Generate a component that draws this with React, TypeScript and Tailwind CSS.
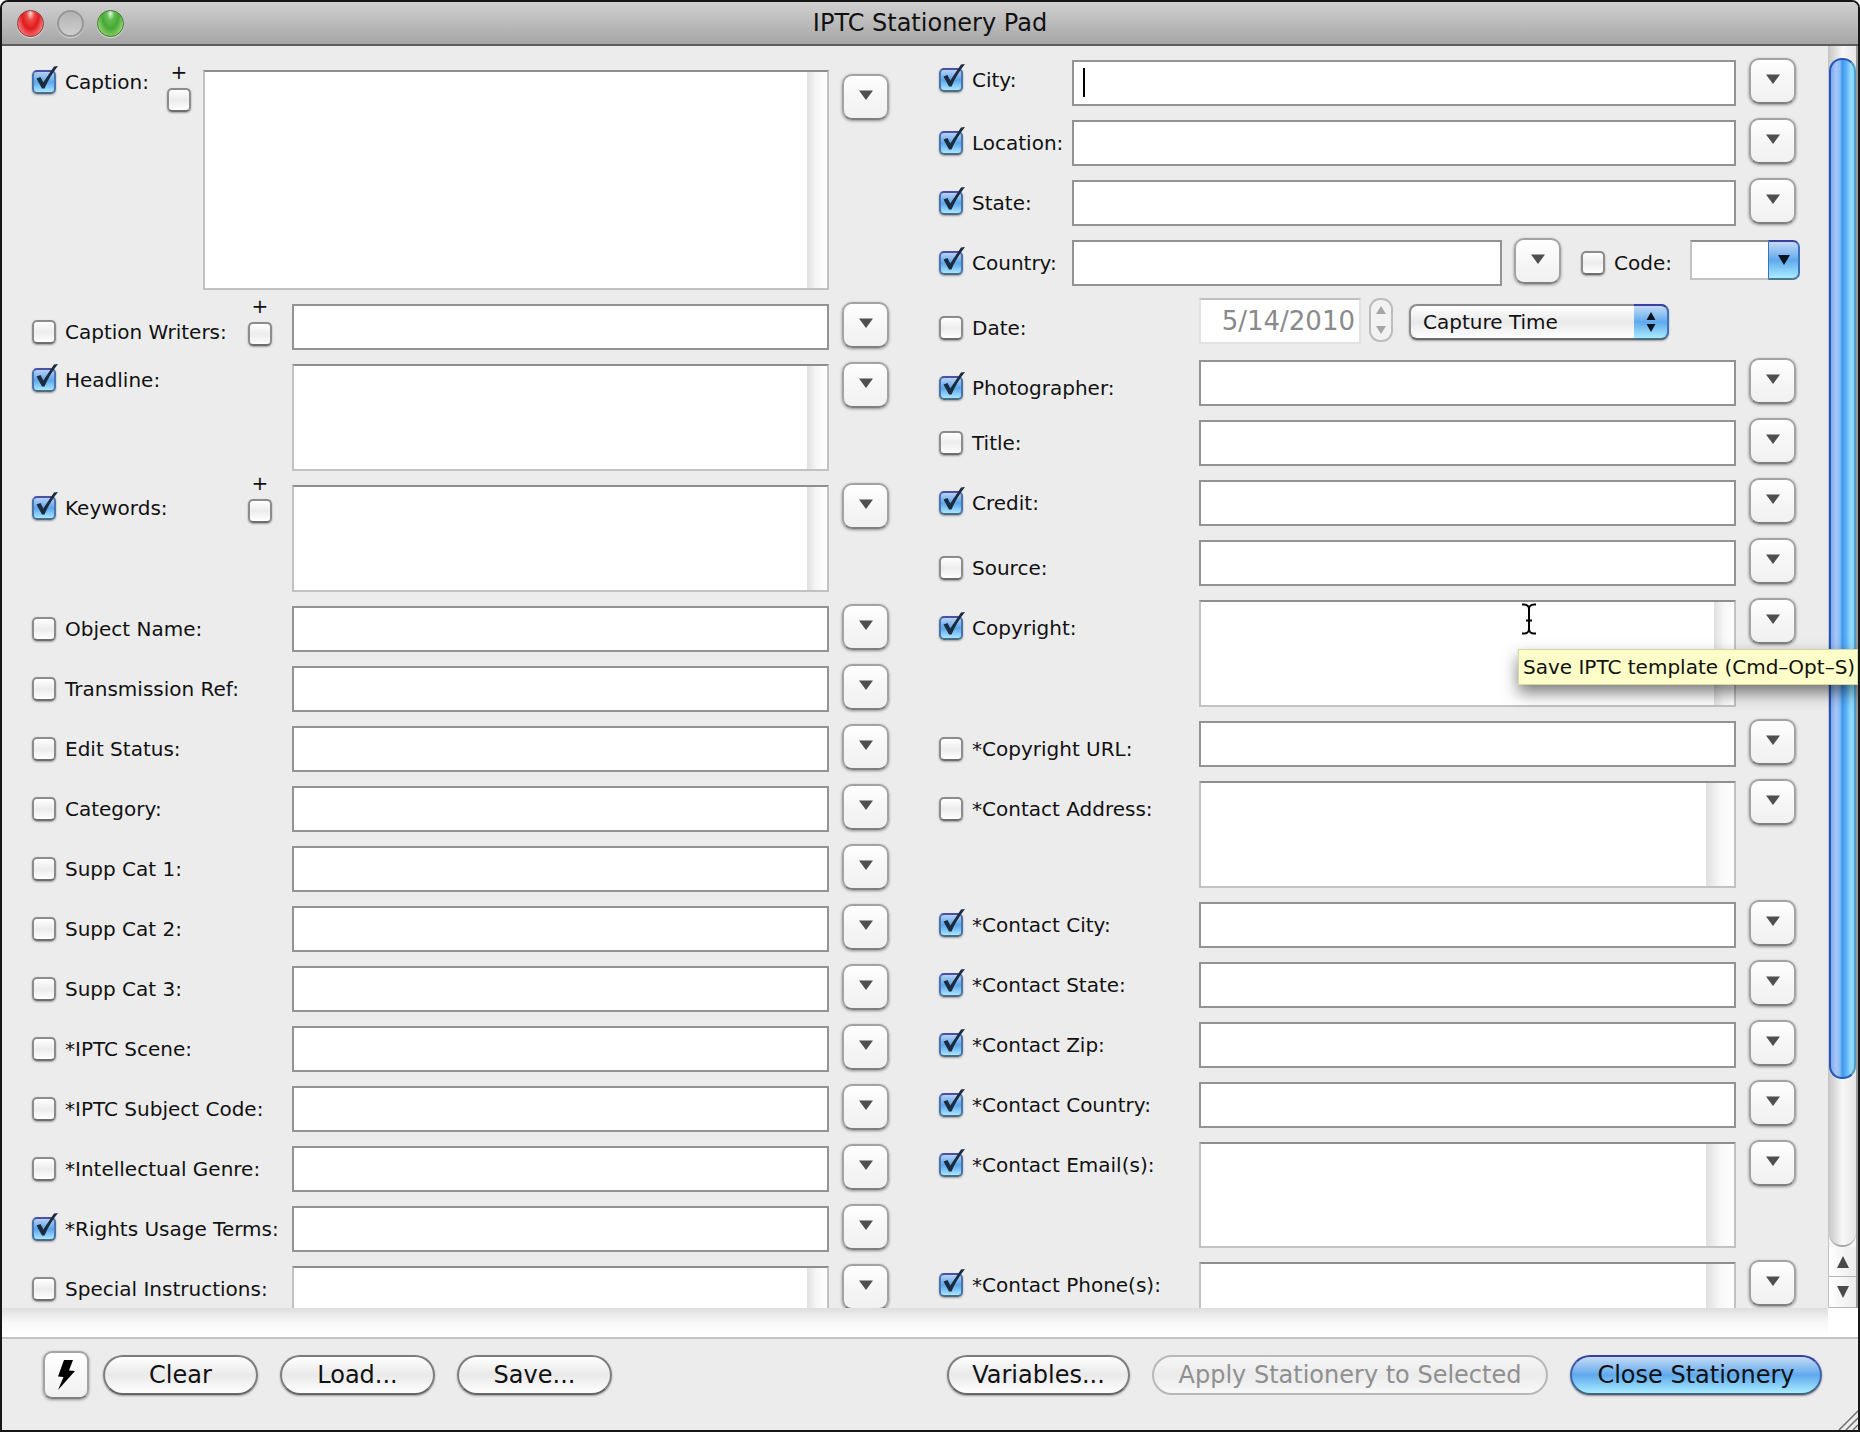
import { useState } from "react";
import clsx from "clsx";

const labelWide = "w-[260px]";
const labelCity = "w-[133px]";
const labelCaption = "w-[171px]";

const whiteGloss =
  "bg-linear-to-b from-white via-[#e9e9e9] to-white";

const blueGloss =
  "bg-linear-to-b from-[#c3dbf5] via-[#5fa9ec] to-[#a9ecff]";

const pill =
  "flex h-10 items-center justify-center rounded-full border-2 text-[24px] leading-7 whitespace-nowrap";

type CheckBoxProps = {
  id: string;
  checked?: boolean;
  label?: string;
};

const CheckBox = ({ id, checked = false, label }: CheckBoxProps) => {
  const [isOn, setIsOn] = useState(checked);

  return (
    <span className="relative block h-6 w-6 shrink-0">
      <input
        type="checkbox"
        id={id}
        aria-label={label}
        checked={isOn}
        onChange={() => setIsOn(!isOn)}
        className={clsx(
          "block h-6 w-6 appearance-none rounded-[5px] border-2 shadow-[0_1px_2px_rgba(0,0,0,0.35)]",
          isOn
            ? "border-[#4a72ab] border-t-[#4c4fa6] border-b-[#4d6b85] bg-linear-to-b from-[#b5d1f3] via-[#5ba5ea] to-[#a8e6ff]"
            : "border-[#8c8c8c] border-b-[#6e6e6e] bg-linear-to-b from-white via-[#ececec] to-white"
        )}
      />
      {isOn && (
        <svg
          viewBox="0 0 28 30"
          className="pointer-events-none absolute -top-1 left-0 h-[30px] w-7"
        >
          <path
            d="M4.5 12.5L8.500 11L11.300 16.500L22 0.500L26 0C20.500 7 16 14 12.500 22.500L10 22.500Z"
            fill="#1c2b3d"
          />
        </svg>
      )}
    </span>
  );
};

const DropButton = ({
  label,
  className = "-mt-0.5",
}: {
  label: string;
  className?: string;
}) => (
  <button
    type="button"
    aria-label={`${label} history`}
    className={clsx(
      "flex h-[46px] w-[47px] shrink-0 justify-center rounded-[10px] border-2 border-[#a3a3a3] border-b-[#808080] bg-linear-to-b from-white via-[#f6f6f6] to-[#f1f1f1] pt-[14px] shadow-[0_1px_3px_rgba(0,0,0,0.4)]",
      className
    )}
  >
    <svg viewBox="0 0 14 10" className="h-[10px] w-[14px]">
      <path d="M0 0.500H14L7 10Z" fill="#4f4f4f" />
    </svg>
  </button>
);

type RowProps = {
  name: string;
  checked?: boolean;
  // height of the multi-line box, single line when left out
  area?: string;
  strip?: string;
  labelWidth?: string;
  labelPad?: string;
  buttonTop?: string;
  plus?: string;
  caret?: boolean;
};

const Label = ({
  id,
  name,
  checked,
  labelPad = "pt-[11px]",
}: {
  id: string;
  name: string;
  checked?: boolean;
  labelPad?: string;
}) => (
  <div className={clsx("flex items-center gap-[9px] self-start", labelPad)}>
    <CheckBox id={id} checked={checked} />
    <label htmlFor={id} className="text-[20px] leading-6 whitespace-nowrap">
      {name}
    </label>
  </div>
);

const Row = ({
  name,
  checked,
  area,
  strip = "w-[20px]",
  labelWidth = labelWide,
  labelPad,
  buttonTop,
  plus,
  caret,
}: RowProps) => {
  const id = name.toLowerCase().replace(/[^a-z0-9]+/g, "-");

  return (
    <div className="flex items-start">
      <div className={clsx("flex shrink-0 justify-between", labelWidth)}>
        <Label id={id} name={name} checked={checked} labelPad={labelPad} />
        {plus && (
          <div className={clsx("flex flex-col items-center gap-1.5", plus)}>
            <span className="text-[20px] leading-5">+</span>
            <CheckBox id={`${id}-append`} label={`Append to ${name}`} />
          </div>
        )}
      </div>

      {area ? (
        <div
          className={clsx(
            "flex min-w-0 flex-1 border-2 border-[#c2c2c2] border-t-[#8e8e8e] bg-white",
            area
          )}
        >
          <textarea
            aria-label={name}
            className="min-w-0 flex-1 resize-none px-2 text-[20px] outline-none"
          />
          <div
            className={clsx(
              "bg-linear-to-r from-[#e0e0e0] via-[#f8f8f8] to-white",
              strip
            )}
          />
        </div>
      ) : (
        <div className="relative min-w-0 flex-1">
          <input
            type="text"
            aria-label={name}
            className="block h-[46px] w-full border-2 border-[#939393] bg-white px-2 text-[20px] outline-none"
          />
          {caret && (
            <span className="absolute top-2 left-[11px] h-[29px] w-0.5 bg-black" />
          )}
        </div>
      )}

      <div className="w-[13px] shrink-0" />
      <DropButton label={name} className={buttonTop} />
    </div>
  );
};

const CountryRow = () => (
  <div className="flex items-start">
    <div className={clsx("shrink-0", labelCity)}>
      <Label id="country" name="Country:" checked />
    </div>
    <input
      type="text"
      aria-label="Country"
      className="block h-[46px] min-w-0 flex-1 border-2 border-[#939393] bg-white px-2 text-[20px]"
    />
    <div className="w-3 shrink-0" />
    <DropButton label="Country" />
    <div className="w-5 shrink-0" />
    <Label id="code" name="Code:" />
    <div className="-mr-1 ml-[18px] flex h-10 w-[110px] shrink-0">
      <input
        type="text"
        aria-label="Code"
        className="min-w-0 flex-1 border-2 border-r-0 border-[#c2c2c2] border-t-[#8e8e8e] bg-white px-1 text-[20px]"
      />
      <button
        type="button"
        aria-label="Choose code"
        className={clsx(
          "flex w-8 items-center justify-center rounded-r-[7px] border-2 border-l border-[#3d72b8] border-t-[#3b3fa0] border-b-[#4d7690]",
          blueGloss
        )}
      >
        <svg viewBox="0 0 12 10" className="h-[10px] w-3">
          <path d="M0 0H12L6 10Z" fill="#0c1420" />
        </svg>
      </button>
    </div>
  </div>
);

const DateRow = () => (
  <div className="flex h-[46px] items-start">
    <div className={clsx("shrink-0", labelWide)}>
      <Label id="date" name="Date:" labelPad="pt-4" />
    </div>
    <input
      type="text"
      aria-label="Date"
      disabled
      defaultValue="5/14/2010"
      className="-mt-0.5 block h-[46px] w-[162px] border-2 border-[#e2e2e2] border-t-[#c0c0c0] bg-white pr-1 text-right text-[26px] text-[#8a8a8a]"
    />
    <button
      type="button"
      disabled
      aria-label="Step date"
      className="-mt-0.5 ml-2 flex h-11 w-6 flex-col items-center justify-between rounded-[11px] border-2 border-[#bdbdbd] bg-[#f2f2f2] py-1.5"
    >
      <svg viewBox="0 0 10 8" className="h-2 w-[10px]">
        <path d="M5 0L10 8H0Z" fill="#a6a6a6" />
      </svg>
      <svg viewBox="0 0 10 8" className="h-2 w-[10px]">
        <path d="M0 0H10L5 8Z" fill="#a6a6a6" />
      </svg>
    </button>
    <div className="relative mt-1 ml-4 h-9 w-[260px]">
      <select
        aria-label="Date source"
        className={clsx(
          "h-9 w-full appearance-none rounded-[8px] border-2 border-[#8c8c8c] border-b-[#6a6a6a] pr-10 pl-3 text-[20px] leading-6 shadow-[0_1px_2px_rgba(0,0,0,0.35)]",
          whiteGloss
        )}
      >
        <option>Capture Time</option>
      </select>
      <span
        className={clsx(
          "pointer-events-none absolute top-0 right-0 flex h-9 w-[35px] items-center justify-center rounded-r-[8px] border-2 border-l-0 border-[#3d72b8] border-t-[#3b3fa0] border-b-[#4d6b80]",
          blueGloss
        )}
      >
        <svg viewBox="0 0 10 20" className="h-5 w-[10px]">
          <path d="M5 0L9.500 8H0.500Z M0.500 12H9.500L5 20Z" fill="#0c1420" />
        </svg>
      </span>
    </div>
  </div>
);

const LEFT_ROWS: RowProps[] = [
  {
    name: "Caption:",
    checked: true,
    area: "h-[220px]",
    labelWidth: labelCaption,
    labelPad: "pt-0",
    buttonTop: "mt-1",
    plus: "-mt-2 mr-3",
  },
  { name: "Caption Writers:", labelPad: "pt-4", plus: "-mt-2 mr-5" },
  { name: "Headline:", checked: true, area: "h-[107px]", labelPad: "pt-1" },
  {
    name: "Keywords:",
    checked: true,
    area: "h-[107px]",
    plus: "-mt-3 mr-5",
  },
  { name: "Object Name:" },
  { name: "Transmission Ref:" },
  { name: "Edit Status:" },
  { name: "Category:" },
  { name: "Supp Cat 1:" },
  { name: "Supp Cat 2:" },
  { name: "Supp Cat 3:" },
  { name: "*IPTC Scene:" },
  { name: "*IPTC Subject Code:" },
  { name: "*Intellectual Genre:" },
  { name: "*Rights Usage Terms:", checked: true },
  { name: "Special Instructions:", area: "h-[107px]" },
];

const PLACE_ROWS: RowProps[] = [
  { name: "City:", checked: true, caret: true, labelPad: "pt-2" },
  { name: "Location:", checked: true },
  { name: "State:", checked: true },
];

const CREDIT_ROWS: RowProps[] = [
  { name: "Photographer:", checked: true, labelPad: "pt-4" },
  { name: "Title:" },
  { name: "Credit:", checked: true },
  { name: "Source:", labelPad: "pt-4" },
  { name: "Copyright:", checked: true, area: "h-[107px]", labelPad: "pt-4" },
  { name: "*Copyright URL:", labelPad: "pt-4" },
  {
    name: "*Contact Address:",
    area: "h-[107px]",
    strip: "w-[28px]",
    labelPad: "pt-4",
  },
  { name: "*Contact City:", checked: true },
  { name: "*Contact State:", checked: true },
  { name: "*Contact Zip:", checked: true },
  { name: "*Contact Country:", checked: true },
  {
    name: "*Contact Email(s):",
    checked: true,
    area: "h-[106px]",
    strip: "w-[28px]",
  },
  {
    name: "*Contact Phone(s):",
    checked: true,
    area: "h-[107px]",
    strip: "w-[28px]",
  },
];

const TitleBar = () => (
  <header className="relative flex h-[44px] shrink-0 items-center justify-center border-b-2 border-[#5c5c5c] bg-linear-to-b from-[#d0d0d0] to-[#a6a6a6]">
    <div className="absolute left-[15px] flex gap-[13px]">
      <button
        type="button"
        aria-label="Close"
        className="h-[27px] w-[27px] rounded-full border border-[#8c3a38] bg-[radial-gradient(ellipse_at_50%_10%,#ffd9d6_0%,#ee4a45_22%,#e01b1f_48%,#ff8d8c_85%,#ffb3b0_100%)] shadow-[0_1px_1px_rgba(255,255,255,0.6)]"
      />
      <button
        type="button"
        aria-label="Minimize"
        disabled
        className="h-[27px] w-[27px] rounded-full border-2 border-[#979797] bg-linear-to-b from-[#b3b3b3] to-[#cfcfcf] shadow-[0_1px_1px_rgba(255,255,255,0.6)]"
      />
      <button
        type="button"
        aria-label="Zoom"
        className="h-[27px] w-[27px] rounded-full border border-[#3f7a35] bg-[radial-gradient(ellipse_at_50%_10%,#e4f8dc_0%,#63bd51_22%,#46a835_48%,#a3e077_85%,#c4f09a_100%)] shadow-[0_1px_1px_rgba(255,255,255,0.6)]"
      />
    </div>
    <h1 className="text-[24px] leading-7">IPTC Stationery Pad</h1>
  </header>
);

const ScrollBar = () => (
  <div className="flex w-[30px] shrink-0 flex-col border-r-2 border-l border-[#c4c4c4] border-r-[#9a9a9a] bg-[#f6f6f6]">
    <div className="flex-1 rounded-b-[14px] border-b-2 border-[#a5a5a5] bg-linear-to-r from-[#c9c9c9] via-[#f7f7f7] to-[#e6e6e6] pt-3">
      <div className="h-[86%] rounded-[13px] border-2 border-[#2456bd] border-r-[#4f9ccb] bg-[linear-gradient(to_right,#7fa9ec_0%,#a9c8f6_22%,#8abcf5_38%,#3e98f0_50%,#62b4f6_68%,#8fdcfd_85%,#86d4f8_100%)]" />
    </div>
    <button
      type="button"
      aria-label="Scroll up"
      className="flex h-[30px] items-center justify-center border-b border-[#b5b5b5] bg-linear-to-r from-white to-[#ececec]"
    >
      <svg viewBox="0 0 12 12" className="h-3 w-3">
        <path d="M6 0L12 12H0Z" fill="#4a4a4a" />
      </svg>
    </button>
    <button
      type="button"
      aria-label="Scroll down"
      className="flex h-[31px] items-center justify-center border-b border-[#b5b5b5] bg-linear-to-r from-white to-[#ececec]"
    >
      <svg viewBox="0 0 12 12" className="h-3 w-3">
        <path d="M0 0H12L6 12Z" fill="#4a4a4a" />
      </svg>
    </button>
  </div>
);

const plainPill = clsx(
  pill,
  whiteGloss,
  "border-[#7d7d7d] border-b-[#666666] shadow-[0_1px_2px_rgba(0,0,0,0.35)]"
);

const Footer = () => (
  <footer className="flex h-[91px] shrink-0 items-start pt-3 pr-9 pl-[41px]">
    <div className="flex h-12 w-full items-center gap-[22px]">
      <button
        type="button"
        aria-label="Actions"
        className="-mr-2 flex h-12 w-[46px] items-center justify-center rounded-[9px] border-2 border-[#a3a3a3] border-b-[#808080] bg-linear-to-b from-white to-[#f1f1f1] shadow-[0_1px_3px_rgba(0,0,0,0.4)]"
      >
        <svg viewBox="0 0 18 30" className="h-[30px] w-[18px]">
          <path d="M7 0H16L12 10.500L18 11L1 30L6.500 17L1 16.500Z" fill="#000" />
        </svg>
      </button>
      <button type="button" className={clsx(plainPill, "w-[155px]")}>
        Clear
      </button>
      <button type="button" className={clsx(plainPill, "w-[155px]")}>
        Load...
      </button>
      <button type="button" className={clsx(plainPill, "w-[155px]")}>
        Save...
      </button>
      <button type="button" className={clsx(plainPill, "ml-auto w-[183px]")}>
        Variables...
      </button>
      <button
        type="button"
        disabled
        className={clsx(
          pill,
          "w-[396px] border-[#b8b8b8] bg-linear-to-b from-[#f6f6f6] via-[#ebebeb] to-[#f8f8f8] text-[#8f8f8f]"
        )}
      >
        Apply Stationery to Selected
      </button>
      <button
        type="button"
        className={clsx(
          pill,
          blueGloss,
          "w-[252px] border-[#3d63a8] border-t-[#3b3fa0] border-b-[#466079] shadow-[0_1px_2px_rgba(0,0,0,0.4)]"
        )}
      >
        Close Stationery
      </button>
    </div>
  </footer>
);

const App = () => {
  return (
    <div className="relative flex h-screen flex-col overflow-hidden rounded-t-[8px] border-2 border-[#161616] bg-[#ececec] font-['DejaVu_Sans',sans-serif] text-[#111111]">
      <TitleBar />

      <main className="flex min-h-0 flex-1">
        <form className="grid min-w-0 flex-1 grid-cols-2 items-start gap-x-[50px] overflow-hidden pr-8 pl-[30px]">
          <section className="flex flex-col gap-3.5 pt-6">
            {LEFT_ROWS.map((row) => (
              <Row key={row.name} {...row} />
            ))}
          </section>

          <section className="flex flex-col gap-3.5 pt-3.5">
            {PLACE_ROWS.map((row) => (
              <Row key={row.name} {...row} labelWidth={labelCity} />
            ))}
            <CountryRow />
            <DateRow />
            {CREDIT_ROWS.map((row) => (
              <Row key={row.name} {...row} />
            ))}
          </section>
        </form>

        <ScrollBar />
      </main>

      <div className="flex h-[31px] shrink-0 border-b-2 border-[#c2c2c2] bg-white">
        <div className="mr-[30px] flex-1 bg-linear-to-b from-[#dedede] via-[#f8f8f8] to-white" />
      </div>

      <Footer />

      {/* text cursor */}
      <svg
        viewBox="0 0 14 32"
        className="pointer-events-none absolute top-[601px] right-[322px] h-8 w-[14px]"
        fill="none"
        stroke="#000"
        strokeWidth="2"
      >
        <path d="M0 1.500H2C5 1.500 7 3.500 7 6V26C7 28.500 5 30.500 2 30.500H0 M14 1.500H12C9 1.500 7 3.500 7 6 M14 30.500H12C9 30.500 7 28.500 7 26 M4 17.500H10" />
      </svg>

      <div
        role="tooltip"
        className="absolute top-[647px] right-0 h-9 w-[340px] overflow-hidden border border-[#d5d5a8] bg-[#fefec8] pl-1 text-[20px] leading-[34px] whitespace-nowrap shadow-[0_8px_16px_rgba(0,0,0,0.5)]"
      >
        Save IPTC template (Cmd–Opt–S)
      </div>

      {/* resize grip */}
      <svg
        viewBox="0 0 20 20"
        className="absolute right-0 bottom-0 h-5 w-5"
        stroke="#6f6f6f"
        strokeWidth="1.500"
      >
        <path d="M1 20L20 1 M8 20L20 8 M15 20L20 15" />
      </svg>
    </div>
  );
};

export default App;
